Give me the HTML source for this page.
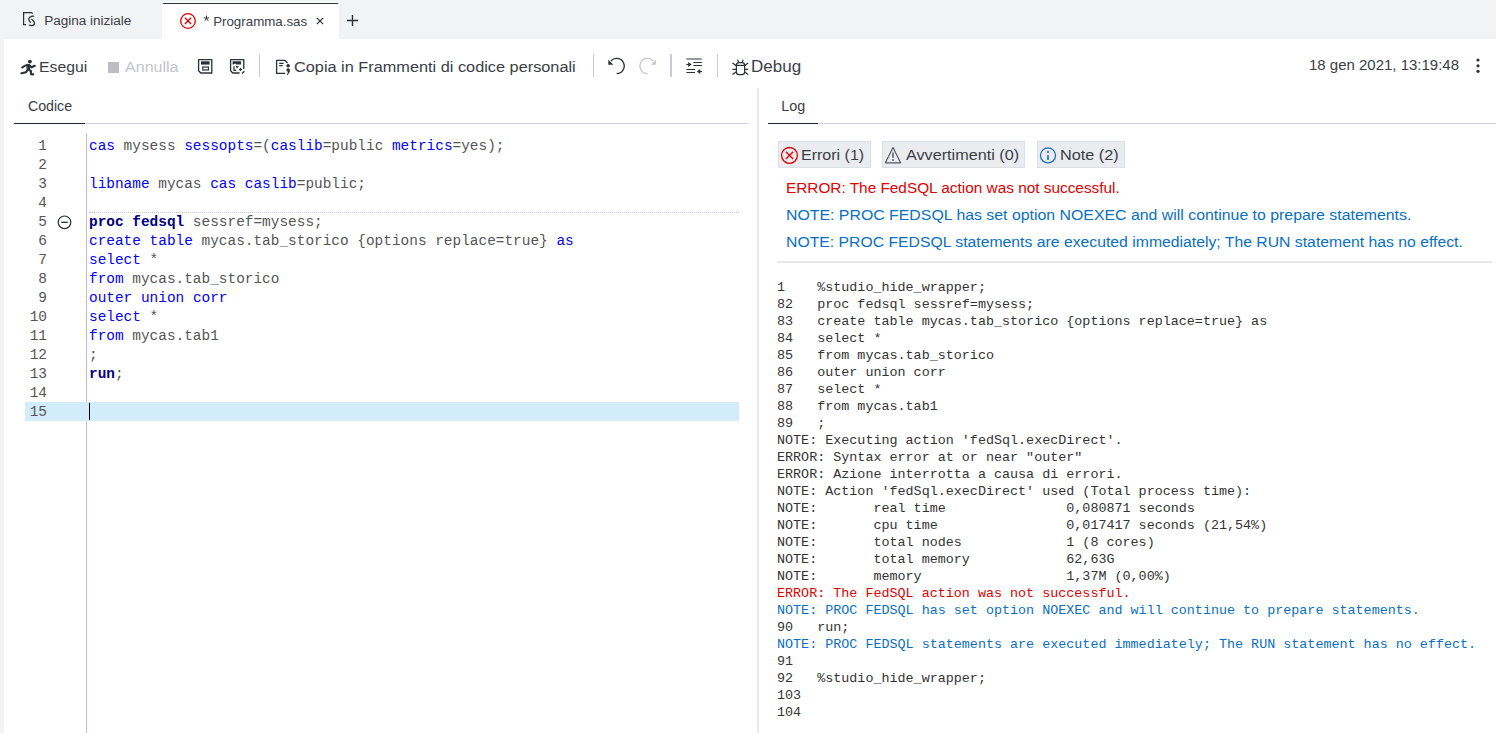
<!DOCTYPE html>
<html><head><meta charset="utf-8">
<style>
*{box-sizing:border-box;margin:0;padding:0}
html,body{width:1496px;height:733px;overflow:hidden;background:#f2f3f5;font-family:"Liberation Sans",sans-serif;color:#2b2f36}
.a{position:absolute;white-space:pre}
.sep{position:absolute;top:54px;width:1px;height:23px;background:#c8cbd3}
.code{font-family:"Liberation Mono",monospace;font-size:14.43px;line-height:19px;color:#555}
.k{color:#0000ff}
.b{color:#000080;font-weight:bold}
.ln{font-family:"Liberation Mono",monospace;font-size:14.43px;line-height:19px;color:#555;text-align:right;width:30px}
.log{font-family:"Liberation Mono",monospace;font-size:13.4px;line-height:17px;color:#333}
.er{color:#e00000}
.nt{color:#0a6fc2}
.btn{position:absolute;top:141px;height:27px;background:#eaecef;border:1px solid #dcdfe4}
</style></head><body>
<svg class="a" style="left:19px;top:8px" width="22" height="22" viewBox="0 0 22 22" fill="none" stroke="#2b2f36" stroke-width="1.2">
<path d="M7 16.6H4.6V4.6H12.6L13.6 5.6"/>
<path d="M15.2 8.3C12 7.8 9.4 9.5 9.8 11.6C10.1 13 11.2 14 11.8 14.6" stroke-width="1.3"/>
<path d="M12.4 11C14.5 12.5 15.8 14 15.4 16C15 17.6 12.5 17.8 10 17.2" stroke-width="1.3"/>
</svg>
<div class="a" style="left:44.22px;top:11px;font-size:13.52px;line-height:20px;color:#3a3e46;transform:scaleX(1.0);transform-origin:0 0;">Pagina iniziale</div>
<div class="a" style="left:162px;top:2px;width:177px;height:37px;background:#fff"></div>
<div class="a" style="left:163px;top:3px;width:175px;height:1px;background:#2b303b"></div>
<svg class="a" style="left:179px;top:12px" width="18" height="18" viewBox="0 0 18 18"><circle cx="9" cy="9" r="7.3" fill="none" stroke="#e00000" stroke-width="1.3"/><path d="M5.9 5.75L12.1 11.95M12.1 5.75L5.9 11.95" stroke="#e00000" stroke-width="1.3"/></svg>
<svg class="a" style="left:203px;top:15.4px" width="7" height="7" viewBox="0 0 7 7" stroke="#2b2f36" stroke-width="1"><path d="M3.5 0.6V3.5M3.5 3.5L0.8 2.6M3.5 3.5L6.2 2.6M3.5 3.5L1.8 5.8M3.5 3.5L5.2 5.8"/></svg>
<div class="a" style="left:213.13px;top:12px;font-size:13.33px;line-height:20px;color:#3a3e46;transform:scaleX(1.0);transform-origin:0 0;">Programma.sas</div>
<svg class="a" style="left:315px;top:16px" width="10" height="10" viewBox="0 0 10 10"><path d="M1.8 1.8L8.2 8.2M8.2 1.8L1.8 8.2" stroke="#2b2f36" stroke-width="1.2"/></svg>
<svg class="a" style="left:345px;top:13px" width="15" height="15" viewBox="0 0 15 15"><path d="M7.5 2V13M2 7.5H13" stroke="#2b2f36" stroke-width="1.4"/></svg>
<div class="a" style="left:4px;top:39px;width:1492px;height:694px;background:#fff"></div>
<svg class="a" style="left:18px;top:56px" width="22" height="22" viewBox="0 0 22 22" fill="none" stroke="#2b2f36" stroke-width="2.1" stroke-linecap="round" stroke-linejoin="round">
<circle cx="11.9" cy="5.6" r="1.95" fill="#2b2f36" stroke="none"/>
<path d="M9.2 8.4L12.2 8.9L11.6 13.6L9.4 13.4Z" fill="#2b2f36" stroke-width="1"/>
<path d="M10.4 9Q7.2 8.8 4.2 11.6"/><path d="M11.2 9.4L13.6 11.2L16.8 9.8"/>
<path d="M10 13.4L8 16.2L3.4 17.2"/><path d="M10.8 13.6L13 15.2L13 18.2L15.2 18.4"/></svg>
<div class="a" style="left:38.94px;top:57px;font-size:14.67px;line-height:20px;color:#3a3e46;transform:scaleX(1.0753);transform-origin:0 0;">Esegui</div>
<div class="a" style="left:108px;top:62px;width:11px;height:11px;background:#bdbec3"></div>
<div class="a" style="left:124.7px;top:57px;font-size:14.93px;line-height:20px;color:#c3c4cb;transform:scaleX(1.0753);transform-origin:0 0;">Annulla</div>
<svg class="a" style="left:194px;top:55px" width="22" height="22" viewBox="0 0 22 22" fill="none" stroke="#2b2f36" stroke-width="1.3">
<path d="M4.6 4.6H17.8V18H6.8L4.6 15.8Z" stroke-linejoin="round"/>
<rect x="7" y="6.3" width="8.6" height="3.3" fill="#2b2f36" stroke="none"/>
<rect x="8.8" y="12" width="5.6" height="3" stroke-width="1.2"/></svg>
<svg class="a" style="left:226px;top:55px" width="22" height="22" viewBox="0 0 22 22" fill="none" stroke="#2b2f36" stroke-width="1.3">
<path d="M17.8 14V4.6H4.6V15.8L6.8 18H13.6" stroke-linejoin="round"/>
<path d="M6.6 6.3H15V9.5H10.5L9.2 8.6L7.4 9.5H6.6Z" fill="#2b2f36" stroke="none"/>
<path d="M8 11.2V15.4H10.3" stroke-width="1.2"/>
<path d="M9.6 10.4L13 11.6L10.8 13.4Z" fill="#2b2f36" stroke="none"/>
<path d="M12.8 14.5L14.5 12.8L16.2 14.5L14.5 16.2Z" fill="#2b2f36" stroke="none"/>
<path d="M16 18.6L18.4 16.2" stroke-width="1.4"/></svg>
<div class="sep" style="left:259px"></div>
<svg class="a" style="left:272px;top:56px" width="22" height="22" viewBox="0 0 22 22" fill="none" stroke="#2b2f36" stroke-width="1.3">
<path d="M13 17.4H4.6V4.4H12.8L15.6 7" stroke-linejoin="round"/>
<path d="M7.2 7.3H11.6M7.2 9.6H10.6" stroke-width="1.2"/>
<circle cx="16.1" cy="9.7" r="1.75" fill="#2b2f36" stroke="none"/>
<path d="M14.4 14.1A1.75 1.75 0 0 1 17.9 14.1C17.9 16 17 17.8 15.3 19.2L14.8 18.7C15.6 17.7 15.9 16.8 15.9 15.8A1.75 1.75 0 0 1 14.4 14.1Z" fill="#2b2f36" stroke="none"/></svg>
<div class="a" style="left:293.98px;top:57px;font-size:15.16px;line-height:20px;color:#3a3e46;transform:scaleX(1.0753);transform-origin:0 0;">Copia in Frammenti di codice personali</div>
<div class="sep" style="left:593px"></div>
<svg class="a" style="left:604px;top:55px" width="24" height="23" viewBox="0 0 24 23" fill="none">
<path d="M6.8 6.1A7.6 7.6 0 1 1 12.6 18.6" stroke="#2b2f36" stroke-width="1.3"/>
<path d="M4.3 4.8V9.8H9.4Z" fill="#2b2f36"/></svg>
<svg class="a" style="left:634px;top:55px" width="24" height="23" viewBox="0 0 24 23" fill="none">
<path d="M19.4 6.1A7.6 7.6 0 1 0 13.6 18.6" stroke="#c6c8ce" stroke-width="1.3"/>
<path d="M21.9 4.8V9.8H16.8Z" fill="#c6c8ce"/></svg>
<div class="sep" style="left:670px;width:2px"></div>
<svg class="a" style="left:682px;top:54px" width="24" height="24" viewBox="0 0 24 24" fill="none" stroke="#2b2f36" stroke-width="1.2">
<path d="M4.4 5H19.8" stroke="#8a8d93" stroke-width="1.8"/>
<path d="M11.4 8.5H19.8M11.4 11.5H19.8M4.4 15.5H13M4.4 18.5H13"/>
<path d="M4.4 10.5H8"/><path d="M6.2 8L9.6 10.5L6.2 13Z" fill="#2b2f36" stroke="none"/>
<path d="M20 17.5H16.5"/><path d="M18.2 15L14.8 17.5L18.2 20Z" fill="#2b2f36" stroke="none"/></svg>
<div class="sep" style="left:717px"></div>
<svg class="a" style="left:728px;top:55px" width="24" height="24" viewBox="0 0 24 24" fill="none" stroke="#2b2f36" stroke-width="1.2">
<rect x="8.4" y="7.6" width="8.2" height="12" rx="2.6"/>
<path d="M7 10.4H18"/>
<path d="M9.6 4.6L10.6 7.6M15.2 4.6L14.2 7.6"/>
<path d="M4.4 8L8.2 10.6M20.2 8L16.8 10.6M4.4 14.3H8.4M16.6 14.3H20.2M4.4 19.6L8.4 16.8M20.2 19.6L16.6 16.8"/></svg>
<div class="a" style="left:751.24px;top:57px;font-size:15.82px;line-height:20px;color:#3a3e46;transform:scaleX(1.0753);transform-origin:0 0;">Debug</div>
<div class="a" style="left:1309.45px;top:55px;font-size:13.95px;line-height:20px;color:#3a3e46;transform:scaleX(1.0753);transform-origin:0 0;">18 gen 2021, 13:19:48</div>
<svg class="a" style="left:1474px;top:56px" width="8" height="20" viewBox="0 0 8 20" fill="#2b2f36"><circle cx="4" cy="4" r="1.6"/><circle cx="4" cy="9.8" r="1.6"/><circle cx="4" cy="15.3" r="1.6"/></svg>
<div class="a" style="left:27.89px;top:96px;font-size:14.21px;line-height:20px;color:#3a3e46;transform:scaleX(1.0);transform-origin:0 0;">Codice</div>
<div class="a" style="left:14px;top:123px;width:734px;height:1px;background:#cdd0d9"></div>
<div class="a" style="left:14px;top:123px;width:71px;height:1px;background:#22262e"></div>
<div class="a" style="left:757px;top:88px;width:2px;height:645px;background:#e8e9ec"></div>
<div class="a" style="left:781.36px;top:96px;font-size:14.29px;line-height:20px;color:#3a3e46;transform:scaleX(1.0);transform-origin:0 0;">Log</div>
<div class="a" style="left:768px;top:123px;width:728px;height:1px;background:#cdd0d9"></div>
<div class="a" style="left:768px;top:123px;width:50px;height:1px;background:#22262e"></div>
<div class="a" style="left:86px;top:133px;width:1px;height:600px;background:#b8bccb"></div>
<div class="a" style="left:25px;top:402px;width:714px;height:19px;background:#d3ecfc"></div>
<div class="a" style="left:89px;top:212px;width:650px;height:1px;border-top:1px dotted #c0c4cf"></div>
<div class="a ln" style="left:17px;top:137px">1
2
3
4
5
6
7
8
9
10
11
12
13
14
15</div>
<svg class="a" style="left:56px;top:214px" width="17" height="17" viewBox="0 0 17 17"><circle cx="8.5" cy="8.3" r="6.3" fill="none" stroke="#2b2f36" stroke-width="1.2"/><path d="M5.2 8.3H11.8" stroke="#2b2f36" stroke-width="1.3"/></svg>
<div class="a code" style="left:89px;top:137px"><span class="k">cas</span> mysess <span class="k">sessopts</span>=(<span class="k">caslib</span>=public <span class="k">metrics</span>=yes);

<span class="k">libname</span> mycas <span class="k">cas</span> <span class="k">caslib</span>=public;

<span class="b">proc</span> <span class="b">fedsql</span> sessref=mysess;
<span class="k">create</span> <span class="k">table</span> mycas.tab_storico {options replace=true} <span class="k">as</span>
<span class="k">select</span> *
<span class="k">from</span> mycas.tab_storico
<span class="k">outer</span> <span class="k">union</span> <span class="k">corr</span>
<span class="k">select</span> *
<span class="k">from</span> mycas.tab1
;
<span class="b">run</span>;

</div>
<div class="a" style="left:89px;top:403px;width:1px;height:17px;background:#000"></div>
<div class="btn" style="left:778px;width:93px"></div>
<div class="btn" style="left:882px;width:143px"></div>
<div class="btn" style="left:1037px;width:88px"></div>
<svg class="a" style="left:780px;top:146px" width="19" height="19" viewBox="0 0 19 19"><circle cx="9.5" cy="9.4" r="7.9" fill="none" stroke="#e00000" stroke-width="1.3"/><path d="M5.9 5.8L13.1 13M13.1 5.8L5.9 13" stroke="#e00000" stroke-width="1.3"/></svg>
<svg class="a" style="left:884px;top:146px" width="19" height="19" viewBox="0 0 19 19" fill="none" stroke="#555a62" stroke-width="1.2"><path d="M9 1.6L16.6 16.8H1.4Z" stroke-linejoin="round"/><path d="M9 6.4V11.8" stroke-width="1.5"/><circle cx="9" cy="14" r="0.9" fill="#555a62" stroke="none"/></svg>
<svg class="a" style="left:1039px;top:146px" width="19" height="19" viewBox="0 0 19 19"><circle cx="9" cy="9.4" r="7.5" fill="none" stroke="#1a6fbd" stroke-width="1.3"/><path d="M9 9.2V13.9" stroke="#1a6fbd" stroke-width="1.7"/><rect x="8.1" y="5" width="1.8" height="1.9" fill="#1a6fbd"/></svg>
<div class="a" style="left:801.42px;top:145px;font-size:14.9px;line-height:20px;color:#3a3e46;transform:scaleX(1.0753);transform-origin:0 0;">Errori (1)</div>
<div class="a" style="left:906.0px;top:145px;font-size:15.07px;line-height:20px;color:#3a3e46;transform:scaleX(1.0753);transform-origin:0 0;">Avvertimenti (0)</div>
<div class="a" style="left:1060.3px;top:145px;font-size:15.13px;line-height:20px;color:#3a3e46;transform:scaleX(1.0753);transform-origin:0 0;">Note (2)</div>
<div class="a" style="left:785.77px;top:178px;font-size:14.29px;line-height:20px;color:#e00000;transform:scaleX(1.0753);transform-origin:0 0;">ERROR: The FedSQL action was not successful.</div>
<div class="a" style="left:785.73px;top:205px;font-size:14.75px;line-height:20px;color:#0a6fc2;transform:scaleX(1.0753);transform-origin:0 0;">NOTE: PROC FEDSQL has set option NOEXEC and will continue to prepare statements.</div>
<div class="a" style="left:785.74px;top:232px;font-size:14.66px;line-height:20px;color:#0a6fc2;transform:scaleX(1.0753);transform-origin:0 0;">NOTE: PROC FEDSQL statements are executed immediately; The RUN statement has no effect.</div>
<div class="a" style="left:777px;top:261px;width:715px;height:2px;background:#e6e7ea"></div>
<div class="a log" style="left:777px;top:279px">1    %studio_hide_wrapper;
82   proc fedsql sessref=mysess;
83   create table mycas.tab_storico {options replace=true} as
84   select *
85   from mycas.tab_storico
86   outer union corr
87   select *
88   from mycas.tab1
89   ;
NOTE: Executing action 'fedSql.execDirect'.
ERROR: Syntax error at or near "outer"
ERROR: Azione interrotta a causa di errori.
NOTE: Action 'fedSql.execDirect' used (Total process time):
NOTE:       real time               0,080871 seconds
NOTE:       cpu time                0,017417 seconds (21,54%)
NOTE:       total nodes             1 (8 cores)
NOTE:       total memory            62,63G
NOTE:       memory                  1,37M (0,00%)
<span class="er">ERROR: The FedSQL action was not successful.</span>
<span class="nt">NOTE: PROC FEDSQL has set option NOEXEC and will continue to prepare statements.</span>
90   run;
<span class="nt">NOTE: PROC FEDSQL statements are executed immediately; The RUN statement has no effect.</span>
91
92   %studio_hide_wrapper;
103
104</div>
</body></html>
